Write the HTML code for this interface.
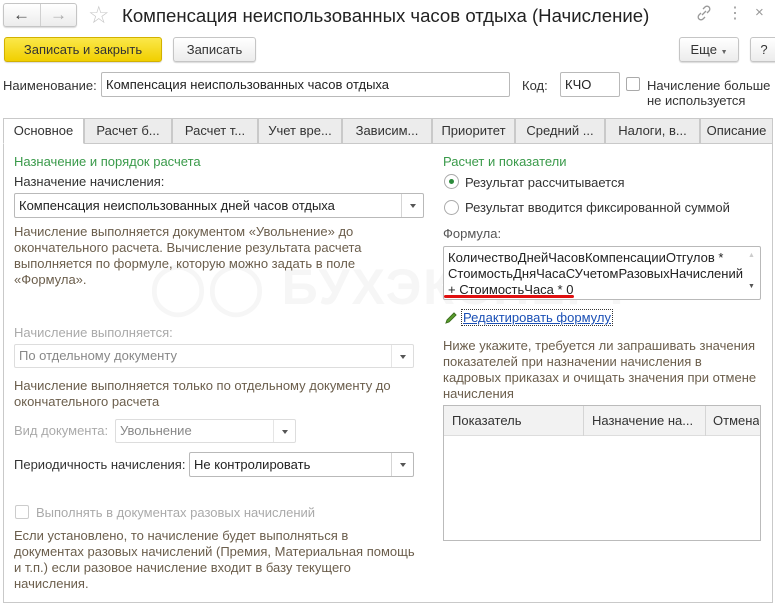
<!DOCTYPE html>
<html><head><meta charset="utf-8"><style>
*{box-sizing:border-box;margin:0;padding:0}
body{width:775px;height:591px;background:#fff;font-family:"Liberation Sans",Arial,sans-serif;font-size:13px;color:#333;position:relative;overflow:hidden}
.a{position:absolute;white-space:nowrap}
.btn{position:absolute;border:1px solid #c5c5c5;border-radius:3px;background:linear-gradient(#fff,#ececec);box-shadow:0 1px 1px rgba(0,0,0,.15);text-align:center;color:#333}
.inp{position:absolute;border:1px solid #b9b9b9;border-radius:2px;background:#fff;padding-left:4px;color:#222}
.dd{position:absolute;right:0;top:0;bottom:0;width:22px;border-left:1px solid #d5d5d5}
.dd:after{content:"";position:absolute;left:8px;top:10px;border:3px solid transparent;border-top:4px solid #555}
.dis{color:#aaa}
.note{color:#6b5e4c}
.green{color:#3a9a4a}
.tab{position:absolute;top:118px;height:26px;border:1px solid #c9c9c9;background:#ececec;text-align:center;line-height:24px;color:#333}
</style></head><body>
<div class="btn" style="left:3px;top:3px;width:74px;height:24px;border-radius:3px"></div>
<div class="a" style="left:40px;top:4px;width:1px;height:22px;background:#d0d0d0"></div>
<div class="a" style="left:13px;top:5px;font-size:17px;color:#444;font-weight:bold">&#8592;</div>
<div class="a" style="left:50px;top:5px;font-size:17px;color:#aaa;font-weight:bold">&#8594;</div>
<div class="a" style="left:88px;top:1px;font-size:24px;color:#c8c8c8">&#9734;</div>
<div class="a" style="left:122px;top:5px;font-size:18.6px;color:#222">Компенсация неиспользованных часов отдыха (Начисление)</div>
<svg class="a" style="left:696px;top:5px" width="16" height="16" viewBox="0 0 16 16"><path d="M6 10 L10 6 M7 4 L9 2 a2.5 2.5 0 0 1 4 4 L11 8 M9 12 L7 14 a2.5 2.5 0 0 1 -4 -4 L5 8" fill="none" stroke="#999" stroke-width="1.3"/></svg>
<div class="a" style="left:727px;top:3px;font-size:16px;color:#999">&#8942;</div>
<div class="a" style="left:755px;top:4px;font-size:15px;color:#999">×</div>
<div class="btn" style="left:4px;top:37px;width:158px;height:25px;line-height:23px;background:linear-gradient(#fbe84a,#f1cf00);border-color:#d2b100;color:#333">Записать и закрыть</div>
<div class="btn" style="left:173px;top:37px;width:83px;height:25px;line-height:23px">Записать</div>
<div class="btn" style="left:679px;top:37px;width:60px;height:25px;line-height:23px">Еще <span style="font-size:7px;color:#666">&#9660;</span></div>
<div class="btn" style="left:750px;top:37px;width:28px;height:25px;line-height:23px">?</div>
<div class="a" style="left:3px;top:78px">Наименование:</div>
<div class="inp" style="left:101px;top:72px;width:409px;height:25px;line-height:23px">Компенсация неиспользованных часов отдыха</div>
<div class="a" style="left:522px;top:78px">Код:</div>
<div class="inp" style="left:560px;top:72px;width:60px;height:25px;line-height:23px">КЧО</div>
<div class="a" style="left:626px;top:77px;width:14px;height:14px;border:1px solid #aaa;border-radius:2px"></div>
<div class="a" style="left:647px;top:78px;line-height:15px">Начисление больше<br>не используется</div>
<div class="a" style="left:3px;top:143px;width:770px;height:460px;border:1px solid #c9c9c9"></div>
<div class="tab" style="left:3px;width:81px;background:#fff;border-bottom-color:#fff">Основное</div>
<div class="tab dis" style="left:84px;width:88px">Расчет б...</div>
<div class="tab" style="left:172px;width:86px">Расчет т...</div>
<div class="tab" style="left:258px;width:84px">Учет вре...</div>
<div class="tab" style="left:342px;width:90px">Зависим...</div>
<div class="tab" style="left:432px;width:83px">Приоритет</div>
<div class="tab" style="left:515px;width:90px">Средний ...</div>
<div class="tab" style="left:605px;width:95px">Налоги, в...</div>
<div class="tab" style="left:700px;width:73px">Описание</div>
<div class="a" style="left:150px;top:258px;font-size:50px;font-weight:bold;color:#f6f6f6;letter-spacing:2px">&#9711;&#9711; БУХЭКСПЕРТ</div>
<div class="a green" style="left:14px;top:154px">Назначение и порядок расчета</div>
<div class="a" style="left:14px;top:174px">Назначение начисления:</div>
<div class="inp" style="left:14px;top:193px;width:410px;height:25px;line-height:23px">Компенсация неиспользованных дней часов отдыха<div class="dd"></div></div>
<div class="a note" style="left:14px;top:224px;line-height:16px">Начисление выполняется документом «Увольнение» до<br>окончательного расчета. Вычисление результата расчета<br>выполняется по формуле, которую можно задать в поле<br>«Формула».</div>
<div class="a dis" style="left:14px;top:325px">Начисление выполняется:</div>
<div class="inp dis" style="left:14px;top:344px;width:400px;height:24px;line-height:22px;border-color:#ddd;color:#888">По отдельному документу<div class="dd" style="border-color:#e5e5e5"></div></div>
<div class="a note" style="left:14px;top:378px;line-height:16px">Начисление выполняется только по отдельному документу до<br>окончательного расчета</div>
<div class="a dis" style="left:14px;top:423px">Вид документа:</div>
<div class="inp" style="left:115px;top:419px;width:181px;height:24px;line-height:22px;border-color:#ddd;color:#888">Увольнение<div class="dd" style="border-color:#e5e5e5"></div></div>
<div class="a" style="left:14px;top:457px">Периодичность начисления:</div>
<div class="inp" style="left:189px;top:452px;width:225px;height:25px;line-height:23px">Не контролировать<div class="dd"></div></div>
<div class="a" style="left:15px;top:505px;width:14px;height:14px;border:1px solid #ccc;border-radius:2px"></div>
<div class="a dis" style="left:36px;top:505px">Выполнять в документах разовых начислений</div>
<div class="a note" style="left:14px;top:528px;line-height:16px">Если установлено, то начисление будет выполняться в<br>документах разовых начислений (Премия, Материальная помощь<br>и т.п.) если разовое начисление входит в базу текущего<br>начисления.</div>
<div class="a green" style="left:443px;top:154px">Расчет и показатели</div>
<div class="a" style="left:444px;top:174px;width:15px;height:15px;border:1px solid #aaa;border-radius:50%"></div>
<div class="a" style="left:449px;top:179px;width:5px;height:5px;background:#2a8a3a;border-radius:50%"></div>
<div class="a" style="left:465px;top:175px">Результат рассчитывается</div>
<div class="a" style="left:444px;top:200px;width:15px;height:15px;border:1px solid #aaa;border-radius:50%"></div>
<div class="a" style="left:465px;top:200px">Результат вводится фиксированной суммой</div>
<div class="a" style="left:443px;top:226px;color:#555">Формула:</div>
<div class="inp" style="left:443px;top:246px;width:318px;height:54px;padding-left:4px;padding-top:3px;line-height:16px;white-space:nowrap">КоличествоДнейЧасовКомпенсацииОтгулов *<br>СтоимостьДняЧасаСУчетомРазовыхНачислений<br>+ СтоимостьЧаса * 0</div>
<div class="a" style="left:748px;top:252px;font-size:7px;color:#ccc">&#9650;</div>
<div class="a" style="left:748px;top:283px;font-size:7px;color:#555">&#9660;</div>
<div class="a" style="left:444px;top:295px;width:130px;height:3px;background:#e01010;border-radius:2px"></div>
<svg class="a" style="left:444px;top:311px" width="14" height="14" viewBox="0 0 14 14"><path d="M2 12 L3 9 L10 2 L12 4 L5 11 Z" fill="#5aa02c" stroke="#3d6e1e" stroke-width="1"/></svg>
<div class="a" style="left:462px;top:310px;color:#1a4fb5;text-decoration:underline;outline:1px dotted #333;padding:0 1px">Редактировать формулу</div>
<div class="a note" style="left:443px;top:338px;line-height:16px">Ниже укажите, требуется ли запрашивать значения<br>показателей при назначении начисления в<br>кадровых приказах и очищать значения при отмене<br>начисления</div>
<div class="a" style="left:443px;top:405px;width:318px;height:136px;border:1px solid #bbb"></div>
<div class="a" style="left:444px;top:406px;width:316px;height:30px;background:#f2f2f2;border-bottom:1px solid #ddd"></div>
<div class="a" style="left:583px;top:406px;width:1px;height:30px;background:#d5d5d5"></div>
<div class="a" style="left:705px;top:406px;width:1px;height:30px;background:#d5d5d5"></div>
<div class="a" style="left:452px;top:413px">Показатель</div>
<div class="a" style="left:592px;top:413px">Назначение на...</div>
<div class="a" style="left:713px;top:413px;width:46px;overflow:hidden">Отмена</div>
</body></html>
